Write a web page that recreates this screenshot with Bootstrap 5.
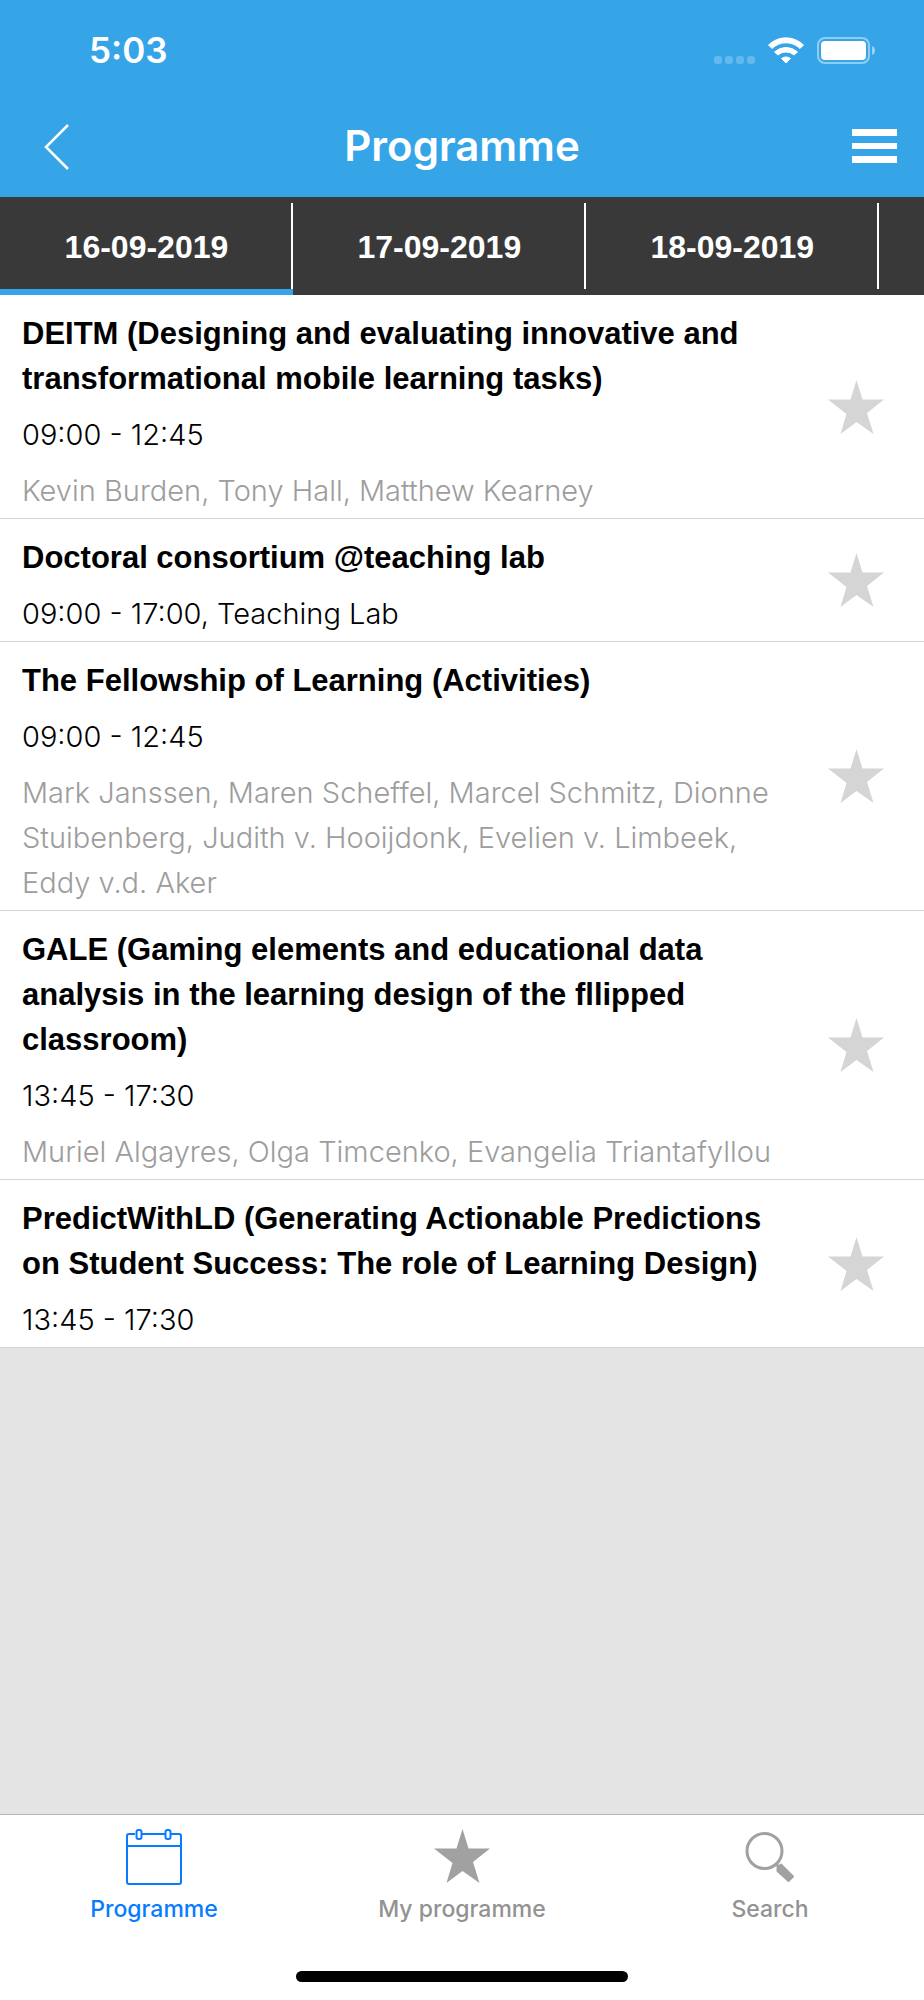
<!DOCTYPE html>
<html lang="en">
<head>
<meta charset="utf-8">
<meta name="viewport" content="width=device-width, initial-scale=1">
<title>Programme</title>
<link href="https://cdn.jsdelivr.net/npm/bootstrap@5.3.0/dist/css/bootstrap.min.css" rel="stylesheet">
<style>
  body { font-family: "Liberation Sans", sans-serif; background: #e4e4e4; color: #000; }
  .app-header { background: #36a5e8; color: #fff; font-family: Inter, sans-serif; font-weight: 600; }
  .status-bar { height: 96px; padding: 4px 48px 0 89px; }
  .clock { font-size: 35px; line-height: 44px; }
  .title-bar { height: 101px; padding: 0 16px; }
  .title-bar h1 { font-size: 42px; line-height: 52px; font-weight: 600; padding-bottom: 2px; }
  .icon-btn { width: 72px; height: 72px; border: 0; background: none; padding: 0; color: inherit; }
  .day-tabs { background: #393939; height: 98px; overflow: hidden; }
  .day-tab { flex: 0 0 31.7%; color: #fff; font-size: 32px; font-weight: 700; text-decoration: none; border-bottom: 6px solid transparent; }
  .day-tab.active { border-bottom-color: #36a5e8; }
  .day-tab span { border-right: 2px solid #fff; margin-top: 6px; padding: 2px 0 0 2px; }
  .session { border-bottom: 1px solid #d6d6d8; background: #fff; font-size: 31px; line-height: 45px; }
  .session-text { padding: 16px 0 5px 22px; }
  .session h2 { font-size: 31px; line-height: 45px; font-weight: 700; }
  .session p, .session h2 { margin: 0 0 11px; }
  .session p:last-child { margin-bottom: 0; }
  .session .when, .session .people { font-family: Inter, sans-serif; font-weight: 300; font-size: 29px; }
  .session .people { color: #9d9d9d; }
  .star-btn { flex: 0 0 136px; border: 0; background: none; padding: 0; color: #d5d5d5; }
  .tab-bar { background: #fff; border-top: 1px solid #b5b5b5; font-family: Inter, sans-serif; font-size: 23px; line-height: 28px; font-weight: 500; }
  .tab-bar a { color: #929292; text-decoration: none; padding-top: 11px; }
  .tab-bar a.active { color: #087cff; }
  .home-bar { width: 36%; height: 11px; margin: 48px auto 18px; background: #000; border-radius: 6px; }
</style>
</head>
<body class="d-flex flex-column min-vh-100">

<header class="app-header">
  <div class="status-bar d-flex justify-content-between align-items-center">
    <span class="clock">5:03</span>
    <svg width="164" height="30" viewBox="0 0 164 30" fill="#fff" role="img" aria-label="Wi-Fi on, battery full">
      <g opacity=".22"><rect x="2" y="21" width="8" height="8" rx="3"/><rect x="13" y="21" width="8" height="8" rx="3"/><rect x="24" y="21" width="8" height="8" rx="3"/><rect x="35" y="21" width="8" height="8" rx="3"/></g>
      <path d="M56.500 10A25 25 0 0 1 91.500 10L88 13.500A20 20 0 0 0 60 13.500Z" stroke="#fff" stroke-linejoin="round"/>
      <path d="M62.500 17A17 17 0 0 1 85.500 17L82 20A12 12 0 0 0 66 20Z" stroke="#fff" stroke-linejoin="round"/>
      <path d="M69.500 23.500A8 8 0 0 1 78.500 23.500L74 28Z" stroke="#fff" stroke-linejoin="round"/>
      <rect x="106" y="3" width="51" height="25" rx="7" fill="none" stroke="#fff" stroke-width="2" opacity=".45"/>
      <rect x="109" y="6" width="45" height="19" rx="4"/>
      <path d="M160 11Q163 12 163 15.500T160 20Z" opacity=".5"/>
    </svg>
  </div>
  <div class="title-bar d-flex justify-content-between align-items-center">
    <button class="icon-btn" type="button" aria-label="Back">
      <svg class="d-block" width="72" height="72" viewBox="0 0 72 72" fill="none" stroke="#fff" stroke-width="2.500"><path d="M52 14L30 36L52 58"/></svg>
    </button>
    <h1 class="m-0">Programme</h1>
    <button class="icon-btn" type="button" aria-label="Menu">
      <svg class="d-block" width="72" height="72" viewBox="0 0 72 72" fill="#fff"><path d="M16 18h45v7h-45zM16 32h45v6h-45zM16 45h45v7h-45z"/></svg>
    </button>
  </div>
</header>

<nav class="day-tabs d-flex" aria-label="Days">
  <a class="day-tab active d-flex" href="#d16" aria-current="page"><span class="flex-fill d-flex align-items-center justify-content-center">16-09-2019</span></a>
  <a class="day-tab d-flex" href="#d17"><span class="flex-fill d-flex align-items-center justify-content-center">17-09-2019</span></a>
  <a class="day-tab d-flex" href="#d18"><span class="flex-fill d-flex align-items-center justify-content-center">18-09-2019</span></a>
</nav>

<svg class="d-none"><symbol id="star" viewBox="0 0 56 54"><path d="M28.500 0L34.500 19.500H56L39 33L45.500 54L28.500 42L12.500 54L18.500 34L0 19.500H22.500Z"/></symbol></svg>

<main class="flex-grow-1">
  <article class="session d-flex">
    <div class="session-text flex-fill">
      <h2>DEITM (Designing and evaluating innovative and transformational mobile learning tasks)</h2>
      <p class="when">09:00 - 12:45</p>
      <p class="people">Kevin Burden, Tony Hall, Matthew Kearney</p>
    </div>
    <button class="star-btn" type="button" aria-label="Add to my programme"><svg width="56" height="54" fill="currentColor"><use href="#star"/></svg></button>
  </article>
  <article class="session d-flex">
    <div class="session-text flex-fill">
      <h2>Doctoral consortium @teaching lab</h2>
      <p class="when">09:00 - 17:00, Teaching Lab</p>
    </div>
    <button class="star-btn" type="button" aria-label="Add to my programme"><svg width="56" height="54" fill="currentColor"><use href="#star"/></svg></button>
  </article>
  <article class="session d-flex">
    <div class="session-text flex-fill">
      <h2>The Fellowship of Learning (Activities)</h2>
      <p class="when">09:00 - 12:45</p>
      <p class="people">Mark Janssen, Maren Scheffel, Marcel Schmitz, Dionne Stuibenberg, Judith v. Hooijdonk, Evelien v. Limbeek, Eddy v.d. Aker</p>
    </div>
    <button class="star-btn" type="button" aria-label="Add to my programme"><svg width="56" height="54" fill="currentColor"><use href="#star"/></svg></button>
  </article>
  <article class="session d-flex">
    <div class="session-text flex-fill">
      <h2>GALE (Gaming elements and educational data analysis in the learning design of the fllipped classroom)</h2>
      <p class="when">13:45 - 17:30</p>
      <p class="people">Muriel Algayres, Olga Timcenko, Evangelia Triantafyllou</p>
    </div>
    <button class="star-btn" type="button" aria-label="Add to my programme"><svg width="56" height="54" fill="currentColor"><use href="#star"/></svg></button>
  </article>
  <article class="session d-flex">
    <div class="session-text flex-fill">
      <h2>PredictWithLD (Generating Actionable Predictions on Student Success: The role of Learning Design)</h2>
      <p class="when">13:45 - 17:30</p>
    </div>
    <button class="star-btn" type="button" aria-label="Add to my programme"><svg width="56" height="54" fill="currentColor"><use href="#star"/></svg></button>
  </article>
</main>

<footer class="tab-bar">
  <nav class="row g-0 text-center" aria-label="Sections">
    <a class="col active" href="#programme" aria-current="page">
      <svg class="d-block mx-auto mb-1" width="60" height="65" viewBox="0 0 60 65" fill="none" stroke="currentColor" stroke-width="2"><path d="M11 8H5Q3 8 3 10V56Q3 58 5 58H55Q57 58 57 56V10Q57 8 55 8H47M42 8H18M3 20H57"/><rect x="12.500" y="4" width="5" height="9" rx="2"/><rect x="41.500" y="4" width="5" height="9" rx="2"/></svg>
      Programme</a>
    <a class="col" href="#mine">
      <svg class="d-block mx-auto mb-1" width="60" height="65" viewBox="0 0 60 65" fill="#a1a1a1"><use href="#star" x="2" y="3" width="56" height="54"/></svg>
      My programme</a>
    <a class="col" href="#search">
      <svg class="d-block mx-auto mb-1" width="60" height="65" viewBox="0 0 60 65" fill="none" stroke="#a1a1a1"><circle cx="24.500" cy="25" r="17.500" stroke-width="3"/><path d="M36 38l3 3" stroke-width="3"/><path d="M37.500 42L41 38.500L53 50.500L48.500 55L37.500 45Z" fill="#a1a1a1" stroke-width="2" stroke-linejoin="round"/></svg>
      Search</a>
  </nav>
  <div class="home-bar"></div>
</footer>

<script src="https://cdn.jsdelivr.net/npm/bootstrap@5.3.0/dist/js/bootstrap.bundle.min.js"></script>
</body>
</html>
